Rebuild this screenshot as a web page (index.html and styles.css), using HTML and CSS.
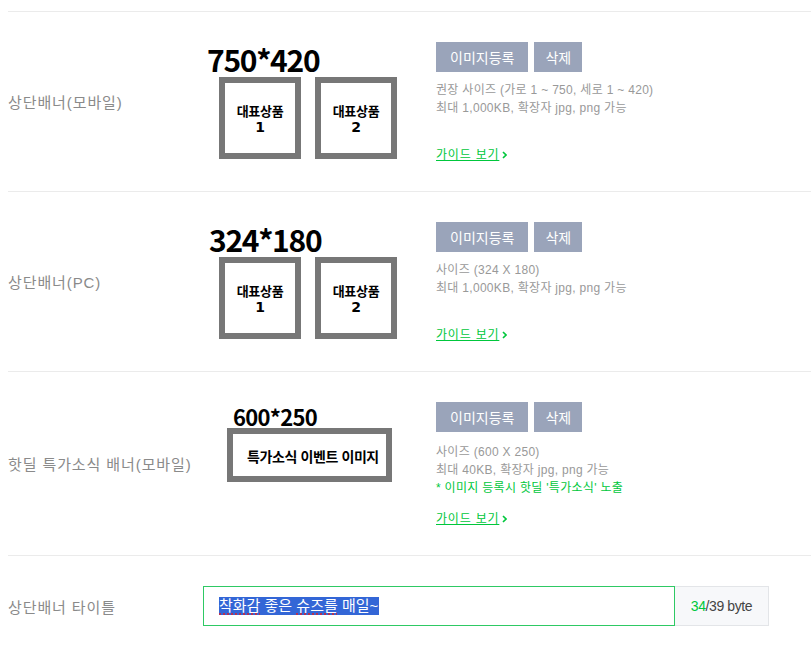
FILE: index.html
```html
<!DOCTYPE html>
<html lang="ko">
<head>
<meta charset="utf-8">
<title>배너 설정</title>
<link rel="stylesheet" href="styles.css">
</head>
<body>
<div class="form">
  <div class="row">
    <div class="label">상단배너(모바일)</div>
    <div class="preview">
      <div class="size big">750*420</div>
      <div class="tiles">
        <div class="tile"><span class="t">대표상품</span><span class="n">1</span></div>
        <div class="tile"><span class="t">대표상품</span><span class="n">2</span></div>
      </div>
    </div>
    <div class="info">
      <div class="btns"><button class="btn">이미지등록</button><button class="btn del">삭제</button></div>
      <div class="desc">권장 사이즈 (가로 1 ~ 750, 세로 1 ~ 420)<br>최대 1,000KB, 확장자 jpg, png 가능</div>
      <a class="guide" href="#">가이드 보기</a><svg class="chev" width="5" height="8" viewBox="0 0 5 8"><path d="M1 1l3 3-3 3" fill="none" stroke="#00c73c" stroke-width="1.6"/></svg>
    </div>
  </div>

  <div class="row">
    <div class="label">상단배너(PC)</div>
    <div class="preview">
      <div class="size big pc">324*180</div>
      <div class="tiles">
        <div class="tile"><span class="t">대표상품</span><span class="n">1</span></div>
        <div class="tile"><span class="t">대표상품</span><span class="n">2</span></div>
      </div>
    </div>
    <div class="info">
      <div class="btns"><button class="btn">이미지등록</button><button class="btn del">삭제</button></div>
      <div class="desc">사이즈 (324 X 180)<br>최대 1,000KB, 확장자 jpg, png 가능</div>
      <a class="guide" href="#">가이드 보기</a><svg class="chev" width="5" height="8" viewBox="0 0 5 8"><path d="M1 1l3 3-3 3" fill="none" stroke="#00c73c" stroke-width="1.6"/></svg>
    </div>
  </div>

  <div class="row hot">
    <div class="label">핫딜 특가소식 배너(모바일)</div>
    <div class="preview">
      <div class="size small">600*250</div>
      <div class="event">특가소식 이벤트 이미지</div>
    </div>
    <div class="info">
      <div class="btns"><button class="btn">이미지등록</button><button class="btn del">삭제</button></div>
      <div class="desc">사이즈 (600 X 250)<br>최대 40KB, 확장자 jpg, png 가능<br><span class="note">* 이미지 등록시 핫딜 '특가소식' 노출</span></div>
      <a class="guide" href="#">가이드 보기</a><svg class="chev" width="5" height="8" viewBox="0 0 5 8"><path d="M1 1l3 3-3 3" fill="none" stroke="#00c73c" stroke-width="1.6"/></svg>
    </div>
  </div>

  <div class="row last">
    <div class="label">상단배너 타이틀</div>
    <div class="field">
      <div class="input"><span class="sel"><span class="typo">착화감</span> 좋은 <span class="typo">슈즈를</span> 매일~</span></div>
      <div class="count"><span class="cur">34</span>/39 byte</div>
    </div>
  </div>
</div>
</body>
</html>
```

FILE: styles.css
```css
* { box-sizing: border-box; }
html, body { margin: 0; background: #fff; }
body {
  font-family: "Liberation Sans", "Noto Sans CJK KR", sans-serif;
  padding: 11px 0 0 8px;
}
.row {
  display: grid;
  grid-template-columns: 195px 233px 1fr;
  border-top: 1px solid #ebebeb;
}
.label {
  align-self: center;
  font-size: 15px;
  color: #8a8a8a;
  letter-spacing: 0.9px;
}
.preview {
  padding-top: 32px;
  font-family: "Noto Sans CJK KR", sans-serif;
  color: #000;
}
.size { font-weight: 700; }
.size.big { font-size: 30px; line-height: 30px; margin-left: 4px; letter-spacing: -1.3px; }
.size.big.pc { margin-left: 6px; }
.size.small { font-size: 22px; line-height: 24px; margin: 0 0 0 30px; letter-spacing: -0.7px; }
.tiles { display: flex; gap: 14px; margin: 3px 0 0 16px; }
.tile {
  width: 82px; height: 82px;
  border: 6px solid #777;
  display: flex; flex-direction: column; align-items: center; justify-content: center;
  text-align: center;
  font-weight: 700;
  padding-top: 1px;
}
.tile .t { font-size: 13px; line-height: 17px; letter-spacing: -0.3px; }
.tile .n { font-family: "DejaVu Sans", sans-serif; font-size: 14px; line-height: 16px; }
.event {
  width: 165px; height: 54px;
  margin: 0 0 0 24px;
  border: 6px solid #777;
  display: flex; align-items: center;
  padding: 2px 0 0 14px;
  font-size: 14px; font-weight: 700; letter-spacing: -0.4px;
}
.info { padding: 30px 0 27px; }
.btns { display: flex; gap: 6px; }
.btn {
  height: 30px; border: 0; border-radius: 0;
  background: #9aa4ba; color: #fff;
  font-family: "Liberation Sans", "Noto Sans CJK KR", sans-serif;
  font-size: 14px; padding: 0 14px; cursor: pointer;
}
.btn.del { padding: 0 11px; }
.desc {
  margin-top: 9px;
  min-height: 54px;
  font-size: 12px; line-height: 18px;
  color: #999;
  letter-spacing: 0.3px;
}
.hot .desc { margin-top: 11px; }
.note { color: #00c73c; }
.guide {
  display: inline-block; margin-top: 11px;
  font-size: 12px; line-height: 18px;
  color: #00c73c; text-decoration: underline;
  letter-spacing: 0.8px;
}
.hot .guide { margin-top: 13px; }
.chev { margin-left: 3px; }
.row.last { padding: 30px 0 30px; }
.field { grid-column: 2 / 4; display: flex; }
.input {
  width: 472px; height: 40px;
  border: 1px solid #2ec964;
  display: flex; align-items: center;
  padding-left: 15px;
  font-size: 15px;
}
.sel { background: #3366d6; color: #fff; line-height: 18px; padding-right: 1px; }
.typo { text-decoration: underline dotted #e0202a; text-underline-offset: 3px; }
.count {
  width: 94px; height: 40px;
  background: #f7f8fa;
  border: 1px solid #e3e5e8; border-left: 0;
  display: flex; align-items: center; justify-content: center;
  font-size: 14px; color: #444; letter-spacing: -0.4px;
}
.cur { color: #00c73c; }
```
